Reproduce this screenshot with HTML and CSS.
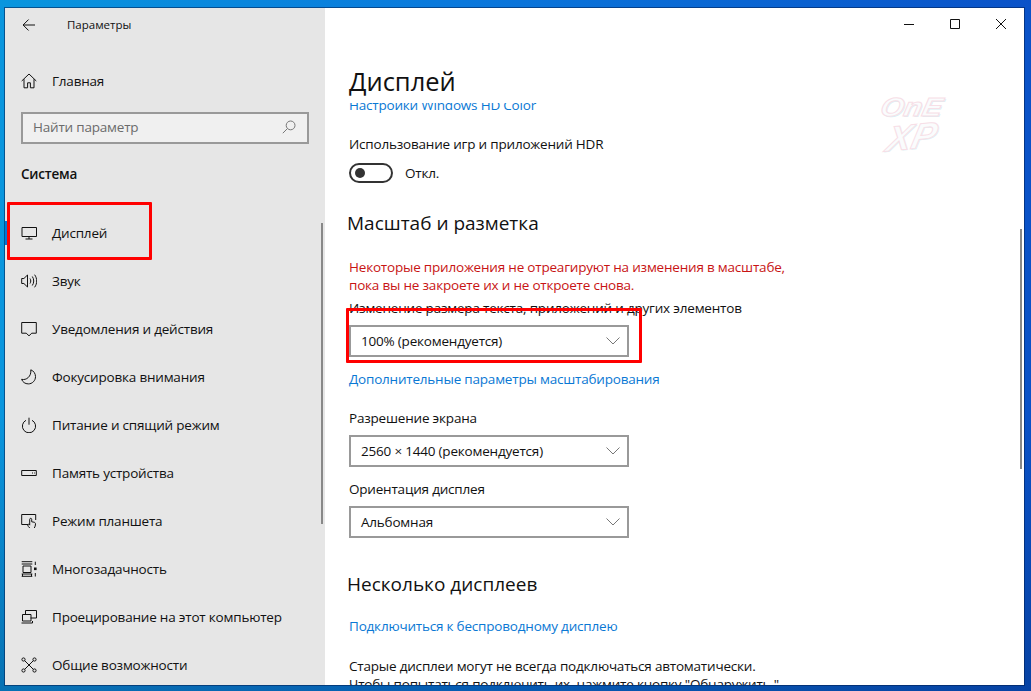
FILE: index.html
```html
<!DOCTYPE html>
<html lang="ru">

<head>
    <meta charset="UTF-8">
    <title>Параметры</title>
    <link rel="stylesheet" href="styles.css">
</head>

<body>
<div class="window">

    <!-- Left navigation -->
    <aside class="sidebar">
        <div class="app-bar">
            <svg class="back-icon" viewBox="0 0 14 14"><path d="M13 7H1.2M6.6 1.5 1.1 7l5.5 5.5"/></svg>
            <span class="app-title">Параметры</span>
        </div>
        <div class="nav-item home-item">
            <svg class="icon" viewBox="0 0 16 16"><path d="M.7 8 8 1l7.3 7M3 6.2v8.6h3.6v-5h2.8v5H13V6.2"/></svg>
            <span>Главная</span>
        </div>
        <div class="search-box">
            <span>Найти параметр</span>
            <svg class="search-icon" viewBox="0 0 14 14"><circle cx="8.6" cy="5.4" r="4.4"/><path d="M5.4 8.6.8 13.2"/></svg>
        </div>
        <div class="nav-heading">Система</div>
        <div class="nav-item active">
            <svg class="icon" viewBox="0 0 16 16"><path d="M1 2.5h14.5v9H1zM8 11.5v2.5M4.5 14h7"/></svg>
            <span>Дисплей</span>
        </div>
        <div class="nav-item">
            <svg class="icon" viewBox="0 0 16 16"><path d="M.7 5.5h2.2L6.5 2v12L2.900 10.500H.7zM9 5.500c1 1.500 1 3.500 0 5M11.300 3.500c1.900 2.700 1.900 6.300 0 9M13.600 1.700c2.800 3.800 2.800 8.800 0 12.600"/></svg>
            <span>Звук</span>
        </div>
        <div class="nav-item">
            <svg class="icon" viewBox="0 0 16 16"><path d="M.7 1.500h14.600v10.700h-4.500L8 14.800l-2.800-2.600H.7z"/></svg>
            <span>Уведомления и действия</span>
        </div>
        <div class="nav-item">
            <svg class="icon" viewBox="0 0 16 16"><path d="M9.800.8c2.800 1 4.700 3.700 4.700 6.800 0 4.100-3.200 7.300-7.200 7.300-3.100 0-5.700-1.800-6.700-4.600 4.700 1.300 10-2.900 9.200-9.500z"/></svg>
            <span>Фокусировка внимания</span>
        </div>
        <div class="nav-item">
            <svg class="icon" viewBox="0 0 16 16"><path d="M8 .7v7M5 3.300a6.600 6.600 0 1 0 6 0"/></svg>
            <span>Питание и спящий режим</span>
        </div>
        <div class="nav-item">
            <svg class="icon" viewBox="0 0 16 16"><path d="M.7 5.500h14.600v5H.7zM11 8h1M13 8h.8"/></svg>
            <span>Память устройства</span>
        </div>
        <div class="nav-item">
            <svg class="icon" viewBox="0 0 16 16"><path d="M7 11.500H.7V1.500h14v5.500M8.800 15c-1.200-.8-1.800-2-2.300-3.400l1.300-.5.900 1V6.300c0-1.300 2-1.300 2 0v2.500l2.300.4c1 .2 1.500.9 1.500 1.800 0 1.600-.5 2.800-1.200 4"/></svg>
            <span>Режим планшета</span>
        </div>
        <div class="nav-item">
            <svg class="icon" viewBox="0 0 16 16"><path d="M.7.700h10.600M.7 3h10.600M2 5h8v6.500H2zM.7 13h10.600M.7 15.300h10.600M1.500 13v2.300M10.500 13v2.300M14.300.700v3.300M14.300 12v3.500"/><path class="icon-fill" d="M13 6.500h2.600v2.600H13z"/></svg>
            <span>Многозадачность</span>
        </div>
        <div class="nav-item">
            <svg class="icon" viewBox="0 0 16 16"><path d="M4.500 5V1.500h11v7.500h-6M1.500 5.500h8.500V12H1.500zM.5 14h11v-2"/></svg>
            <span>Проецирование на этот компьютер</span>
        </div>
        <div class="nav-item">
            <svg class="icon" viewBox="0 0 16 16"><circle cx="2.500" cy="2.500" r="1.600"/><circle cx="13.500" cy="2.500" r="1.600"/><circle cx="2.500" cy="13.500" r="1.600"/><circle cx="13.500" cy="13.500" r="1.600"/><path d="M3.700 3.700l8.600 8.600M12.300 3.700l-8.600 8.600"/></svg>
            <span>Общие возможности</span>
        </div>
        <div class="nav-scrollbar"></div>
    </aside>

    <!-- Settings page -->
    <main class="content">
        <div class="caption-bar">
            <div class="caption-btn"><svg viewBox="0 0 10 10"><path d="M0 5.500h10"/></svg></div>
            <div class="caption-btn"><svg viewBox="0 0 10 10"><path d="M.5.500h9v9h-9z"/></svg></div>
            <div class="caption-btn"><svg viewBox="0 0 10 10"><path d="M0 0l10 10M10 0 0 10"/></svg></div>
        </div>
        <h1 class="page-title">Дисплей</h1>

        <div class="page-scroll">
            <a class="link first-link">Настройки Windows HD Color</a>

            <div class="label hdr-label">Использование игр и приложений HDR</div>
            <div class="toggle-row">
                <span class="toggle"><span class="toggle-knob"></span></span>
                <span>Откл.</span>
            </div>

            <h2 class="scale-title">Масштаб и разметка</h2>
            <p class="warning">Некоторые приложения не отреагируют на изменения в масштабе,<br>пока вы не закроете их и не откроете снова.</p>

            <div class="label size-label">Изменение размера текста, приложений и других элементов</div>
            <div class="select">
                <span>100% (рекомендуется)</span>
                <svg viewBox="0 0 14 8"><path d="M.5.500 7 7l6.500-6.500"/></svg>
            </div>
            <a class="link scale-link">Дополнительные параметры масштабирования</a>

            <div class="label res-label">Разрешение экрана</div>
            <div class="select">
                <span>2560 × 1440 (рекомендуется)</span>
                <svg viewBox="0 0 14 8"><path d="M.5.500 7 7l6.500-6.500"/></svg>
            </div>

            <div class="label orient-label">Ориентация дисплея</div>
            <div class="select">
                <span>Альбомная</span>
                <svg viewBox="0 0 14 8"><path d="M.5.500 7 7l6.500-6.500"/></svg>
            </div>

            <h2 class="multi-title">Несколько дисплеев</h2>
            <a class="link wireless-link">Подключиться к беспроводному дисплею</a>
            <p class="note">Старые дисплеи могут не всегда подключаться автоматически.<br>Чтобы попытаться подключить их, нажмите кнопку "Обнаружить."</p>
        </div>

        <div class="page-scrollbar"></div>
        <div class="watermark"><span class="wm-top">OnE</span><span class="wm-bottom">XP</span></div>
    </main>

    <!-- Red marks drawn on top of the screenshot -->
    <div class="mark mark-display"></div>
    <div class="mark mark-scale"></div>
</div>
</body>

</html>
```

FILE: styles.css
```css
* {
    box-sizing: border-box;
    margin: 0;
    padding: 0;
}

html, body {
    height: 100%;
}

body {
    font-family: "Open Sans", "Noto Sans", sans-serif;
    font-size: 13.5px;
    line-height: 20px;
    letter-spacing: -0.2px;
    color: #111;
    overflow: hidden;
    padding: 8px 7px 6px 5px;
    background:
        linear-gradient(to bottom, rgba(0, 20, 70, 0) 60%, rgba(0, 30, 80, 0.3) 100%),
        linear-gradient(90deg, #0a96de 0%, #0a78dc 45%, #0a52c8 100%);
}

svg {
    fill: none;
    stroke: #111;
    stroke-width: 1;
    flex: none;
}

.window {
    position: relative;
    display: flex;
    height: 100%;
    background-color: #fff;
    box-shadow: 0 0 0 1px rgba(0, 30, 80, 0.55);
}

/* Sidebar */
.sidebar {
    position: relative;
    width: 320px;
    flex: none;
    overflow: hidden;
    background-color: #e6e6e6;
}

.app-bar {
    display: flex;
    align-items: center;
    height: 33px;
    padding-left: 17px;
}

.back-icon {
    width: 14px;
    height: 14px;
}

.app-title {
    font-size: 11.5px;
    letter-spacing: 0;
    margin-left: 31px;
}

.nav-item {
    position: relative;
    display: flex;
    align-items: center;
    gap: 15px;
    height: 48px;
    padding-left: 16px;
}

.home-item {
    margin-top: 16px;
}

.icon {
    width: 16px;
    height: 16px;
}

.icon-fill {
    fill: #111;
    stroke: none;
}

.active::before {
    content: "";
    position: absolute;
    left: 0;
    top: 12px;
    width: 2px;
    height: 24px;
    background-color: #0078d7;
}

.search-box {
    display: flex;
    align-items: center;
    justify-content: space-between;
    height: 32px;
    margin: 7px 16px 0;
    padding: 0 11px 2px 10px;
    border: 2px solid #999;
    background-color: #f0f0f0;
    color: #6b6b6b;
}

.search-icon {
    width: 14px;
    height: 14px;
    stroke: #777;
}

.nav-heading {
    font-weight: 600;
    margin: 20px 0 25px 16px;
}

.nav-scrollbar {
    position: absolute;
    left: 316px;
    top: 215px;
    width: 2px;
    height: 301px;
    background-color: #888;
}

/* Main page */
.content {
    position: relative;
    flex: 1;
    display: flex;
    flex-direction: column;
    overflow: hidden;
    min-width: 0;
}

.caption-bar {
    display: flex;
    justify-content: flex-end;
    height: 32px;
    flex: none;
}

.caption-btn {
    display: flex;
    align-items: center;
    justify-content: center;
    width: 46px;
}

.caption-btn svg {
    width: 10px;
    height: 10px;
}

.page-title {
    font-size: 25.5px;
    font-weight: 400;
    letter-spacing: 0;
    line-height: 38px;
    margin: 22px 0 0 24px;
    flex: none;
}

.page-scroll {
    flex: 1;
    min-height: 0;
    overflow: hidden;
    margin-top: 3px;
    padding-left: 24px;
}

.link {
    display: block;
    color: #0a78d4;
}

.first-link {
    margin-top: -8px;
}

.hdr-label {
    margin-top: 19px;
}

.toggle-row {
    display: flex;
    align-items: center;
    gap: 12px;
    height: 20px;
    margin-top: 9px;
}

.toggle {
    display: flex;
    align-items: center;
    width: 44px;
    height: 20px;
    padding-left: 4px;
    border: 2px solid #333;
    border-radius: 10px;
}

.toggle-knob {
    width: 10px;
    height: 10px;
    border-radius: 50%;
    background-color: #333;
}

h2 {
    font-size: 19px;
    font-weight: 400;
    letter-spacing: 0;
    line-height: 28px;
    margin-left: -2px;
}

.scale-title {
    margin-top: 26px;
}

.warning {
    color: #c81414;
    line-height: 18px;
    margin-top: 21px;
}

.size-label {
    margin-top: 4px;
}

.select {
    display: flex;
    align-items: center;
    justify-content: space-between;
    width: 280px;
    height: 32px;
    margin-top: 7px;
    padding: 0 7px 0 10px;
    border: 2px solid #999;
}

.select svg {
    width: 14px;
    height: 8px;
    stroke: #777;
}

.scale-link {
    margin-top: 12px;
}

.res-label {
    margin-top: 19px;
}

.orient-label {
    margin-top: 12px;
}

.multi-title {
    margin-top: 32px;
}

.wireless-link {
    margin-top: 18px;
}

.note {
    line-height: 18px;
    margin-top: 21px;
}

.page-scrollbar {
    position: absolute;
    left: 695px;
    top: 221px;
    width: 2px;
    height: 240px;
    background-color: #888;
}

.watermark {
    position: absolute;
    left: 552px;
    top: 86px;
    display: flex;
    flex-direction: column;
    align-items: center;
    width: 70px;
    font-family: "Liberation Sans", sans-serif;
    font-weight: 700;
    font-style: italic;
    letter-spacing: 0;
    color: #fafcfd;
    -webkit-text-stroke: 1px #f7dfe7;
    text-shadow: 1px 1px 0 #d8eff3;
}

.wm-top {
    font-size: 26px;
    line-height: 26px;
    transform: scaleX(1.15) skewX(-10deg);
}

.wm-bottom {
    font-size: 36px;
    line-height: 34px;
    transform: skewX(-18deg) rotate(-6deg);
}

/* Red marks */
.mark {
    position: absolute;
    border: 3px solid #f00;
    border-radius: 1px;
}

.mark-display {
    left: 2px;
    top: 194px;
    width: 145px;
    height: 58px;
}

.mark-scale {
    left: 341px;
    top: 300px;
    width: 296px;
    height: 55px;
}
```
